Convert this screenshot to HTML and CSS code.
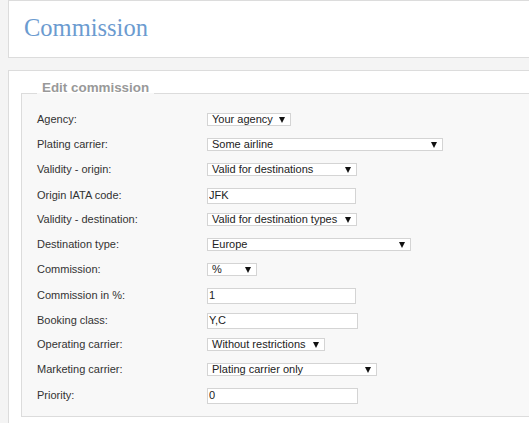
FILE: index.html
```html
<!DOCTYPE html>
<html lang="en">
<head>
<meta charset="utf-8">
<title>Commission</title>
<link rel="stylesheet" href="styles.css">
</head>
<body>
<div class="page">
  <header class="header">
    <h1 class="title">Commission</h1>
  </header>
  <section class="panel">
    <fieldset class="fieldset">
      <legend class="legend">Edit commission</legend>
      <div class="form">
        <label class="label">Agency:</label>
        <div class="select w-agency"><span>Your agency</span><i class="arrow"></i></div>

        <label class="label">Plating carrier:</label>
        <div class="select w-plating"><span>Some airline</span><i class="arrow"></i></div>

        <label class="label">Validity - origin:</label>
        <div class="select w-validity"><span>Valid for destinations</span><i class="arrow"></i></div>

        <label class="label">Origin IATA code:</label>
        <div><input class="input w-149" type="text" value="JFK"></div>

        <label class="label">Validity - destination:</label>
        <div class="select w-validity"><span>Valid for destination types</span><i class="arrow"></i></div>

        <label class="label">Destination type:</label>
        <div class="select w-europe"><span>Europe</span><i class="arrow"></i></div>

        <label class="label">Commission:</label>
        <div class="select w-percent"><span>%</span><i class="arrow"></i></div>

        <label class="label">Commission in %:</label>
        <div><input class="input w-149" type="text" value="1"></div>

        <label class="label">Booking class:</label>
        <div><input class="input w-151" type="text" value="Y,C"></div>

        <label class="label">Operating carrier:</label>
        <div class="select w-without"><span>Without restrictions</span><i class="arrow"></i></div>

        <label class="label">Marketing carrier:</label>
        <div class="select w-marketing"><span>Plating carrier only</span><i class="arrow"></i></div>

        <label class="label">Priority:</label>
        <div><input class="input w-151" type="text" value="0"></div>
      </div>
    </fieldset>
  </section>
</div>
</body>
</html>
```
FILE: styles.css
```css
html, body {
  margin: 0;
  padding: 0;
  overflow: hidden;
  background: #f4f4f4;
}

.page {
  width: 600px;
  padding-left: 8px;
  font-family: "Liberation Sans", Arial, sans-serif;
}

.header {
  background: #fff;
  border: 1px solid #dcdcdc;
  box-sizing: border-box;
  height: 58px;
  padding: 12px 0 0 15px;
}

.title {
  margin: 0;
  font-family: "Liberation Serif", "Times New Roman", serif;
  font-weight: normal;
  font-size: 24.5px;
  line-height: 30px;
  color: #6b9bd0;
}

.panel {
  margin-top: 12px;
  background: #fff;
  border: 1px solid #dcdcdc;
  padding: 9px 0 20px 12px;
}

.fieldset {
  margin: 0;
  border: 1px solid #dcdcdc;
  background: #f8f8f8;
  padding: 0 0 3px 15px;
  min-width: 0;
}

.legend {
  font-weight: bold;
  font-size: 13.4px;
  line-height: 15px;
  color: #999;
  padding: 0 5px 12px;
}

.form {
  display: grid;
  grid-template-columns: 170px auto;
  grid-auto-rows: 25px;
  align-items: baseline;
  justify-items: start;
  padding-top: 6px;
}

.label {
  font-size: 11px;
  line-height: 13px;
  color: #333;
}

.select {
  display: flex;
  align-items: center;
  justify-content: space-between;
  box-sizing: border-box;
  height: 13px;
  border: 1px solid #d4d4d4;
  background: #fff;
  padding: 0 5px 0 4px;
  font-size: 11px;
  line-height: 11px;
  color: #222;
}

.arrow {
  display: block;
  width: 0;
  height: 0;
  border-left: 3px solid transparent;
  border-right: 3px solid transparent;
  border-top: 6px solid #111;
}

.w-agency { width: 84px; }
.w-plating { width: 236px; }
.w-validity { width: 150px; }
.w-europe { width: 204px; }
.w-percent { width: 50px; }
.w-without { width: 118px; }
.w-marketing { width: 170px; }

.input {
  display: block;
  box-sizing: border-box;
  height: 16px;
  margin: 0;
  border: 1px solid #d4d4d4;
  background: #fff;
  padding: 0 1px 3px 1px;
  font-family: "Liberation Sans", Arial, sans-serif;
  font-size: 11px;
  line-height: 11px;
  color: #222;
  outline: none;
}

.w-149 { width: 149px; }
.w-151 { width: 151px; }
```
